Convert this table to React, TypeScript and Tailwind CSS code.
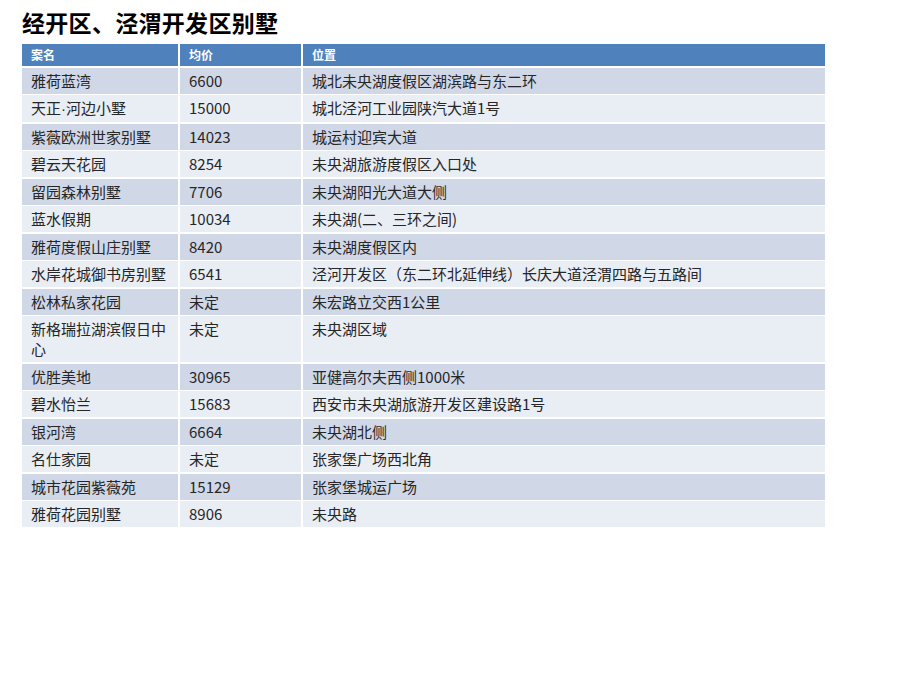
import React from "react";

const rows: [React.ReactNode, string, string][] = [
  ["雅荷蓝湾", "6600", "城北未央湖度假区湖滨路与东二环"],
  [
    <>
      天正<span style={{ fontFamily: '"Liberation Sans", sans-serif' }}>·</span>河边小墅
    </>,
    "15000",
    "城北泾河工业园陕汽大道1号",
  ],
  ["紫薇欧洲世家别墅", "14023", "城运村迎宾大道"],
  ["碧云天花园", "8254", "未央湖旅游度假区入口处"],
  ["留园森林别墅", "7706", "未央湖阳光大道大侧"],
  ["蓝水假期", "10034", "未央湖(二、三环之间)"],
  ["雅荷度假山庄别墅", "8420", "未央湖度假区内"],
  ["水岸花城御书房别墅", "6541", "泾河开发区（东二环北延伸线）长庆大道泾渭四路与五路间"],
  ["松林私家花园", "未定", "朱宏路立交西1公里"],
  ["新格瑞拉湖滨假日中心", "未定", "未央湖区域"],
  ["优胜美地", "30965", "亚健高尔夫西侧1000米"],
  ["碧水怡兰", "15683", "西安市未央湖旅游开发区建设路1号"],
  ["银河湾", "6664", "未央湖北侧"],
  ["名仕家园", "未定", "张家堡广场西北角"],
  ["城市花园紫薇苑", "15129", "张家堡城运广场"],
  ["雅荷花园别墅", "8906", "未央路"],
];

export default function App() {
  return (
    <div
      className="w-[920px] h-[690px] bg-white px-[22px] pt-[8px]"
      style={{ fontFamily: '"Noto Sans CJK SC", "Noto Sans", sans-serif' }}
    >
      <div className="h-[28px] leading-[28px] text-[23px] font-bold text-black tracking-[0.3px]">
        经开区、泾渭开发区别墅
      </div>
      <div className="mt-[8px] grid grid-cols-[156px_121px_522px] gap-x-[2px] gap-y-[1.5px] w-[803px]">
        {["案名", "均价", "位置"].map((h) => (
          <div
            key={h}
            className="h-[22px] leading-[22px] bg-[#4f81bd] text-white font-bold text-[12px] px-[9px]"
          >
            {h}
          </div>
        ))}
        {rows.map((r, i) =>
          r.map((c, j) => (
            <div
              key={`${i}-${j}`}
              className={`${
                i % 2 === 0 ? "bg-[#d0d8e8]" : "bg-[#e9edf4]"
              } text-[15px] leading-[20px] py-[3px] px-[9px] text-[#262626]`}
            >
              {c}
            </div>
          ))
        )}
      </div>
    </div>
  );
}
